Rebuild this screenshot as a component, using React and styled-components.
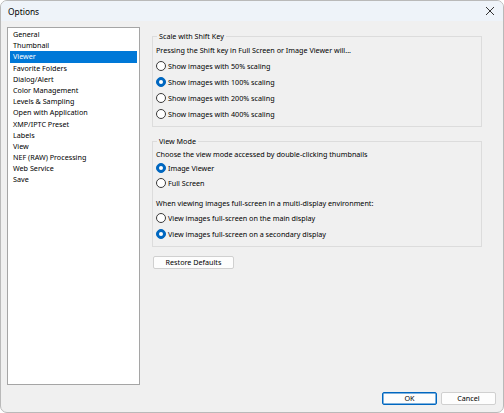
import React from "react";
import styled, { createGlobalStyle } from "styled-components";

const Global = createGlobalStyle`
  html, body { margin: 0; padding: 0; background: #ffffff; }
  body { font-family: "Noto Sans", "Open Sans", sans-serif; font-size: 7.2px; color: #000; }
  * { box-sizing: border-box; }
`;

const Window = styled.div`
  width: 504px;
  height: 413px;
  border: 1px solid #b9b9b9;
  border-radius: 7px;
  overflow: hidden;
  background: #f0f0f0;
  display: flex;
  flex-direction: column;
`;

const TitleBar = styled.div`
  height: 20px;
  flex: none;
  background: #eef3f9;
  display: flex;
  align-items: center;
  justify-content: space-between;
  padding: 0 8px 0 7px;
  font-size: 8.4px;
`;

const Close = styled.span`
  display: flex;
  width: 10px;
  height: 10px;
`;

const Body = styled.div`
  flex: 1;
  display: flex;
  flex-direction: column;
  padding: 6px 7px 7px 6px;
`;

const Main = styled.div`
  display: flex;
  flex: 1;
`;

const List = styled.div`
  width: 133px;
  height: 358px;
  background: #fff;
  border: 1px solid #a5a5a5;
  padding: 1px 2px;
  display: flex;
  flex-direction: column;
`;

const Item = styled.div`
  height: 11.2px;
  line-height: 11.2px;
  padding-left: 3px;
  white-space: nowrap;
  background: ${(p) => (p.$selected ? "#0078d7" : "transparent")};
  color: ${(p) => (p.$selected ? "#fff" : "#000")};
`;

const Panel = styled.div`
  margin-left: 12px;
  width: 330px;
  display: flex;
  flex-direction: column;
  padding-top: 4px;
`;

const Group = styled.fieldset`
  margin: 0 0 ${(p) => p.$mb || 0}px 0;
  padding: 0 0 ${(p) => p.$pb || 5}px 3px;
  border: 1px solid #dcdcdc;
  min-width: 0;
`;

const Legend = styled.legend`
  padding: 0 2px;
  margin-left: 1px;
  line-height: 11px;
  height: 11px;
`;

const Row = styled.div`
  height: ${(p) => p.$h || 16}px;
  margin-top: ${(p) => p.$mt || 0}px;
  display: flex;
  align-items: center;
  white-space: nowrap;
`;

const RadioCircle = styled.span`
  width: 10px;
  height: 10px;
  border-radius: 50%;
  flex: none;
  margin-right: 2px;
  background: ${(p) => (p.$on ? "#0067c0" : "#fff")};
  border: 1px solid ${(p) => (p.$on ? "#0067c0" : "#3a3a3a")};
  display: flex;
  align-items: center;
  justify-content: center;
  &::after {
    content: "";
    display: ${(p) => (p.$on ? "block" : "none")};
    width: 4px;
    height: 4px;
    border-radius: 50%;
    background: #fff;
  }
`;

const Button = styled.button`
  font-family: inherit;
  font-size: 7.2px;
  color: #000;
  height: 13px;
  width: ${(p) => p.$w}px;
  padding: 0;
  background: #fdfdfd;
  border: 1px solid ${(p) => (p.$primary ? "#0067c0" : "#d0d0d0")};
  border-radius: 2px;
  box-shadow: ${(p) => (p.$primary ? "inset 0 0 0 0.5px #0067c0" : "none")};
  line-height: 11px;
`;

const RestoreRow = styled.div`
  margin-top: 9px;
  padding-left: 1px;
`;

const Footer = styled.div`
  display: flex;
  justify-content: flex-end;
  gap: 4px;
  margin-top: 7px;
`;

const Radio = ({ on, h, children }) => (
  <Row $h={h}>
    <RadioCircle $on={on} />
    <span>{children}</span>
  </Row>
);

const items = [
  "General",
  "Thumbnail",
  "Viewer",
  "Favorite Folders",
  "Dialog/Alert",
  "Color Management",
  "Levels & Sampling",
  "Open with Application",
  "XMP/IPTC Preset",
  "Labels",
  "View",
  "NEF (RAW) Processing",
  "Web Service",
  "Save",
];

export default function App() {
  return (
    <>
      <Global />
      <Window>
        <TitleBar>
          <span>Options</span>
          <Close>
            <svg width="10" height="10" viewBox="0 0 10 10">
              <path d="M1 1L9 9M9 1L1 9" stroke="#333" strokeWidth="1" />
            </svg>
          </Close>
        </TitleBar>
        <Body>
          <Main>
            <List>
              {items.map((t) => (
                <Item key={t} $selected={t === "Viewer"}>
                  {t}
                </Item>
              ))}
            </List>
            <Panel>
              <Group $mb={9} $pb={4}>
                <Legend>Scale with Shift Key</Legend>
                <Row>Pressing the Shift key in Full Screen or Image Viewer will...</Row>
                <Radio>Show images with 50% scaling</Radio>
                <Radio on>Show images with 100% scaling</Radio>
                <Radio>Show images with 200% scaling</Radio>
                <Radio>Show images with 400% scaling</Radio>
              </Group>
              <Group $pb={5}>
                <Legend>View Mode</Legend>
                <Row $h={13}>Choose the view mode accessed by double-clicking thumbnails</Row>
                <Radio on h={15}>Image Viewer</Radio>
                <Radio h={15}>Full Screen</Radio>
                <Row $h={14} $mt={6}>
                  When viewing images full-screen in a multi-display environment:
                </Row>
                <Radio h={16}>View images full-screen on the main display</Radio>
                <Radio on h={15}>View images full-screen on a secondary display</Radio>
              </Group>
              <RestoreRow>
                <Button $w={81}>Restore Defaults</Button>
              </RestoreRow>
            </Panel>
          </Main>
          <Footer>
            <Button $w={55} $primary>OK</Button>
            <Button $w={55}>Cancel</Button>
          </Footer>
        </Body>
      </Window>
    </>
  );
}
